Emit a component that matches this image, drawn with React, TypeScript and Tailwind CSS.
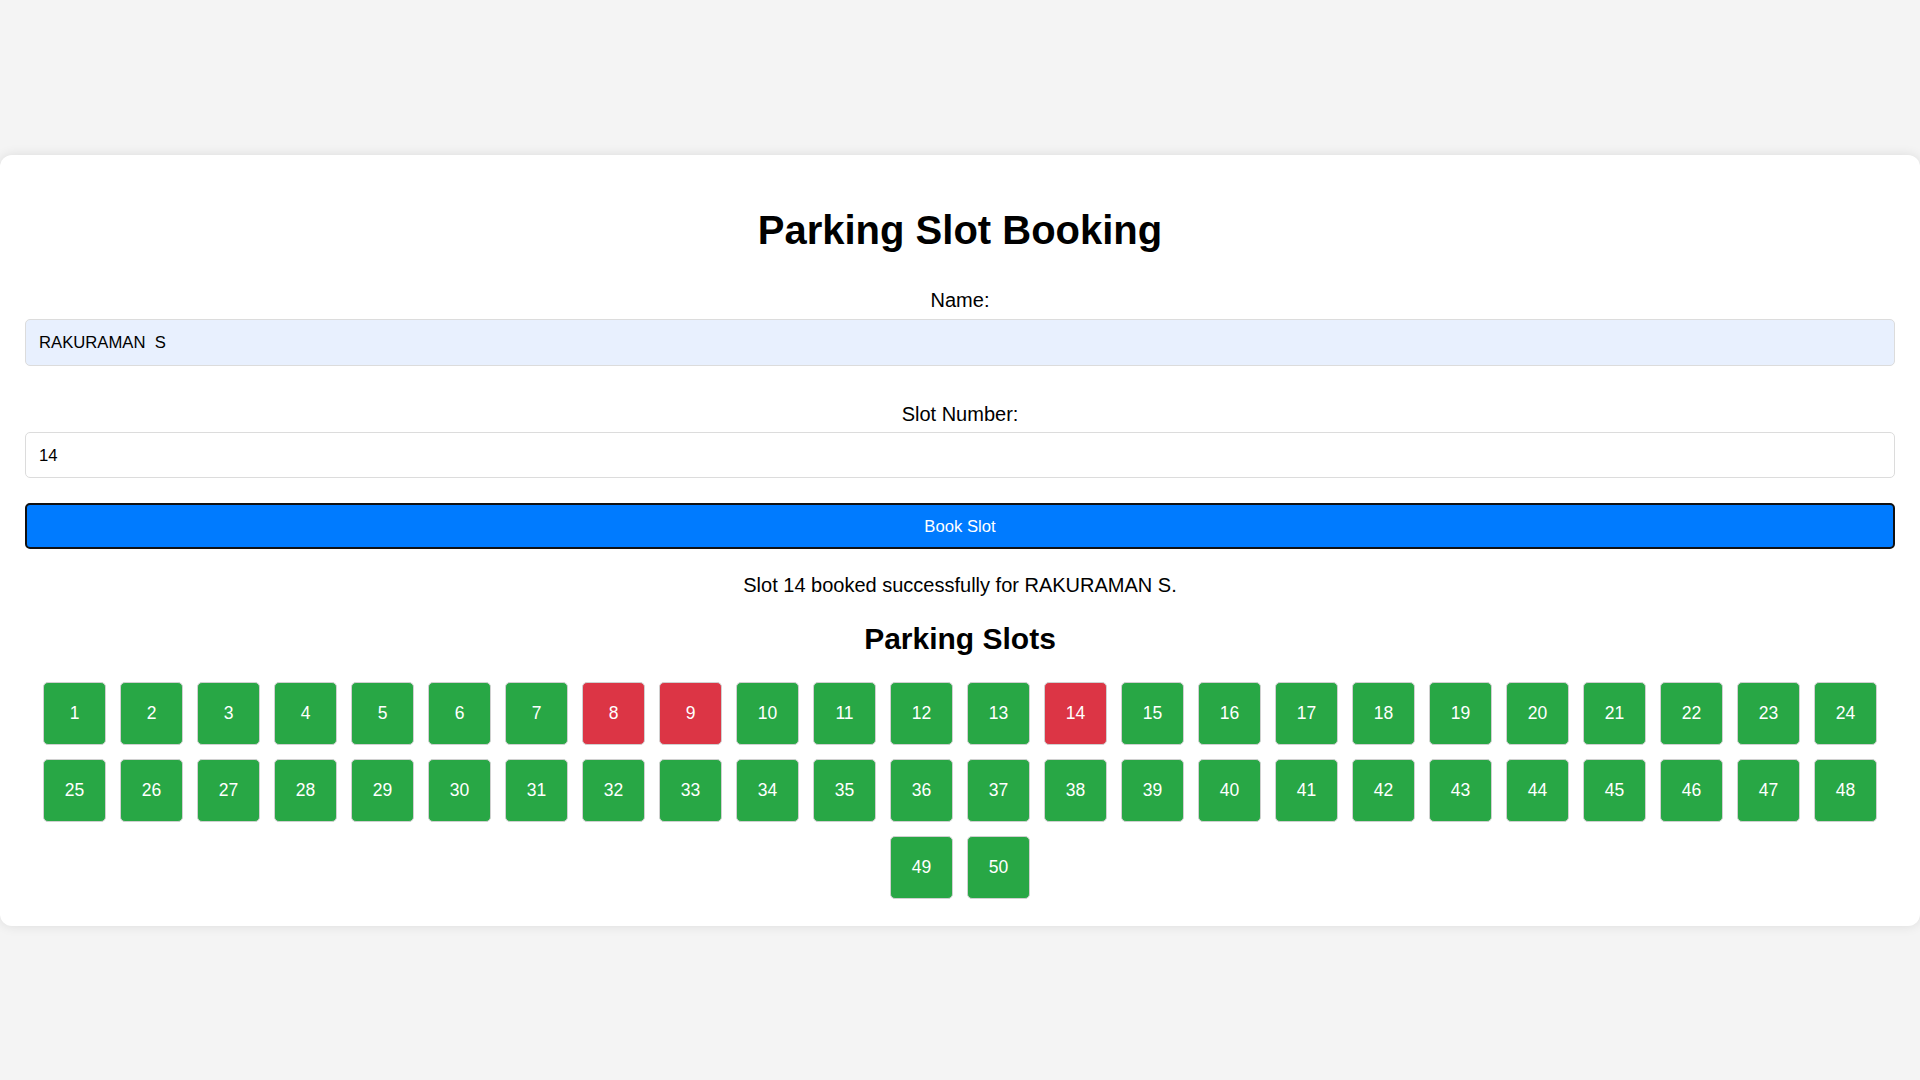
import React from "react";

const booked = new Set([8, 9, 14]);

export default function App() {
  const slots = Array.from({ length: 50 }, (_, i) => i + 1);
  return (
    <div
      className="min-h-screen w-full bg-[#f4f4f4] pt-[155px] pb-[155px]"
      style={{ fontFamily: '"Liberation Sans", Arial, sans-serif' }}
    >
      <div className="w-full bg-white rounded-[12px] shadow-[0_0_12px_rgba(0,0,0,0.1)] px-[25px] pt-[25px] pb-[20px] text-black">
        <h1 className="mt-[27px] text-center text-[40px] leading-[46px] font-bold">
          Parking Slot Booking
        </h1>
        <div className="mt-[36px] flex flex-col">
          <label className="text-center text-[20px] leading-[23px]">Name:</label>
          <div className="mt-[7px] h-[47px] w-full rounded-[5px] border border-[#dcdcdc] bg-[#e8f0fe] px-[13px] flex items-center text-[16.67px] whitespace-pre">
            RAKURAMAN  S
          </div>
        </div>
        <div className="mt-[37px] flex flex-col">
          <label className="text-center text-[20px] leading-[23px]">Slot Number:</label>
          <div className="mt-[6px] h-[46px] w-full rounded-[5px] border border-[#dcdcdc] bg-white px-[13px] flex items-center text-[16.67px]">
            14
          </div>
        </div>
        <button className="mt-[25px] h-[46px] w-full rounded-[5px] border-2 border-[#111] bg-[#007bff] text-white text-[16.67px] flex items-center justify-center">
          Book Slot
        </button>
        <p className="mt-[25px] text-center text-[20px] leading-[23px]">
          Slot 14 booked successfully for RAKURAMAN S.
        </p>
        <h2 className="mt-[24px] text-center text-[30px] leading-[35px] font-bold">
          Parking Slots
        </h2>
        <div className="mt-[19px] flex flex-wrap justify-center">
          {slots.map((n) => (
            <div
              key={n}
              className={
                "m-[7px] flex h-[63px] w-[63px] items-center justify-center rounded-[5px] border border-[#d0d0d0] text-[17.5px] text-white " +
                (booked.has(n) ? "bg-[#dc3545]" : "bg-[#28a745]")
              }
            >
              {n}
            </div>
          ))}
        </div>
      </div>
    </div>
  );
}
